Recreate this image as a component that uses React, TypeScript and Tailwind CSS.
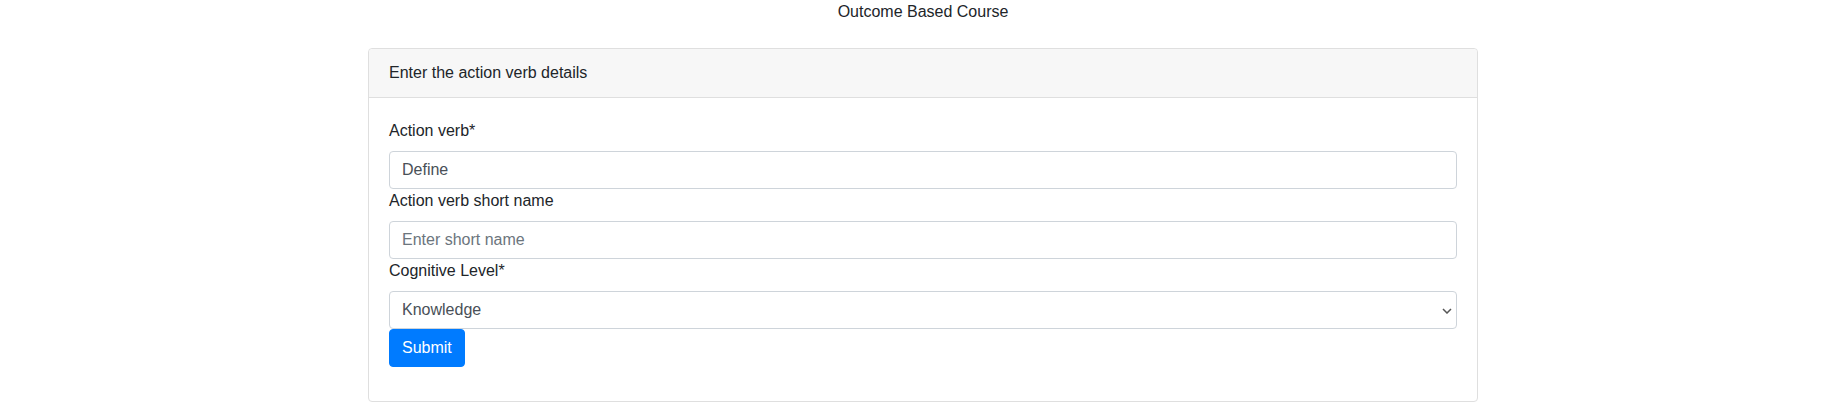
import { useState } from 'react'

const levels = ['Knowledge', 'Comprehension', 'Application', 'Analysis', 'Synthesis', 'Evaluation']

export default function App() {
  const [verb, setVerb] = useState('Define')
  const [shortName, setShortName] = useState('')
  const [level, setLevel] = useState('Knowledge')

  return (
    <div className="min-h-screen bg-white font-['Liberation_Sans',Arial,sans-serif] text-base leading-6 text-[#212529]">
      <div className="h-6 mb-6 text-center">Outcome Based Course</div>

      <div className="max-w-[1140px] mx-auto px-[15px]">
        <div className="border border-[#dfdfdf] rounded">
          <div className="bg-[#f7f7f7] px-5 py-3 border-b border-[#dfdfdf] rounded-t">
            Enter the action verb details
          </div>

          <form className="px-5 pt-[21px] pb-[34px]" onSubmit={e => e.preventDefault()}>
            <label className="block mb-2">Action verb*</label>
            <input
              value={verb}
              onChange={e => setVerb(e.target.value)}
              className="block w-full h-[38px] px-3 border border-[#ced4da] rounded bg-white text-[#495057] outline-none"
            />

            <label className="block mb-2">Action verb short name</label>
            <input
              value={shortName}
              onChange={e => setShortName(e.target.value)}
              placeholder="Enter short name"
              className="block w-full h-[38px] px-3 border border-[#ced4da] rounded bg-white text-[#495057] placeholder-[#6c757d] outline-none"
            />

            <label className="block mb-2">Cognitive Level*</label>
            <div className="relative">
              <select
                value={level}
                onChange={e => setLevel(e.target.value)}
                className="block w-full h-[38px] pl-3 pr-8 border border-[#ced4da] rounded bg-white text-[#495057] appearance-none outline-none"
              >
                {levels.map(l => (
                  <option key={l}>{l}</option>
                ))}
              </select>
              <svg
                className="absolute right-[5px] top-[17px] pointer-events-none"
                width="10"
                height="6"
                viewBox="0 0 10 6"
                fill="none"
              >
                <path d="M1 1l4 4 4-4" stroke="#555" strokeWidth="1.5" />
              </svg>
            </div>

            <button
              type="submit"
              className="h-[38px] px-3 border border-[#007bff] bg-[#007bff] text-white rounded"
            >
              Submit
            </button>
          </form>
        </div>
      </div>
    </div>
  )
}
